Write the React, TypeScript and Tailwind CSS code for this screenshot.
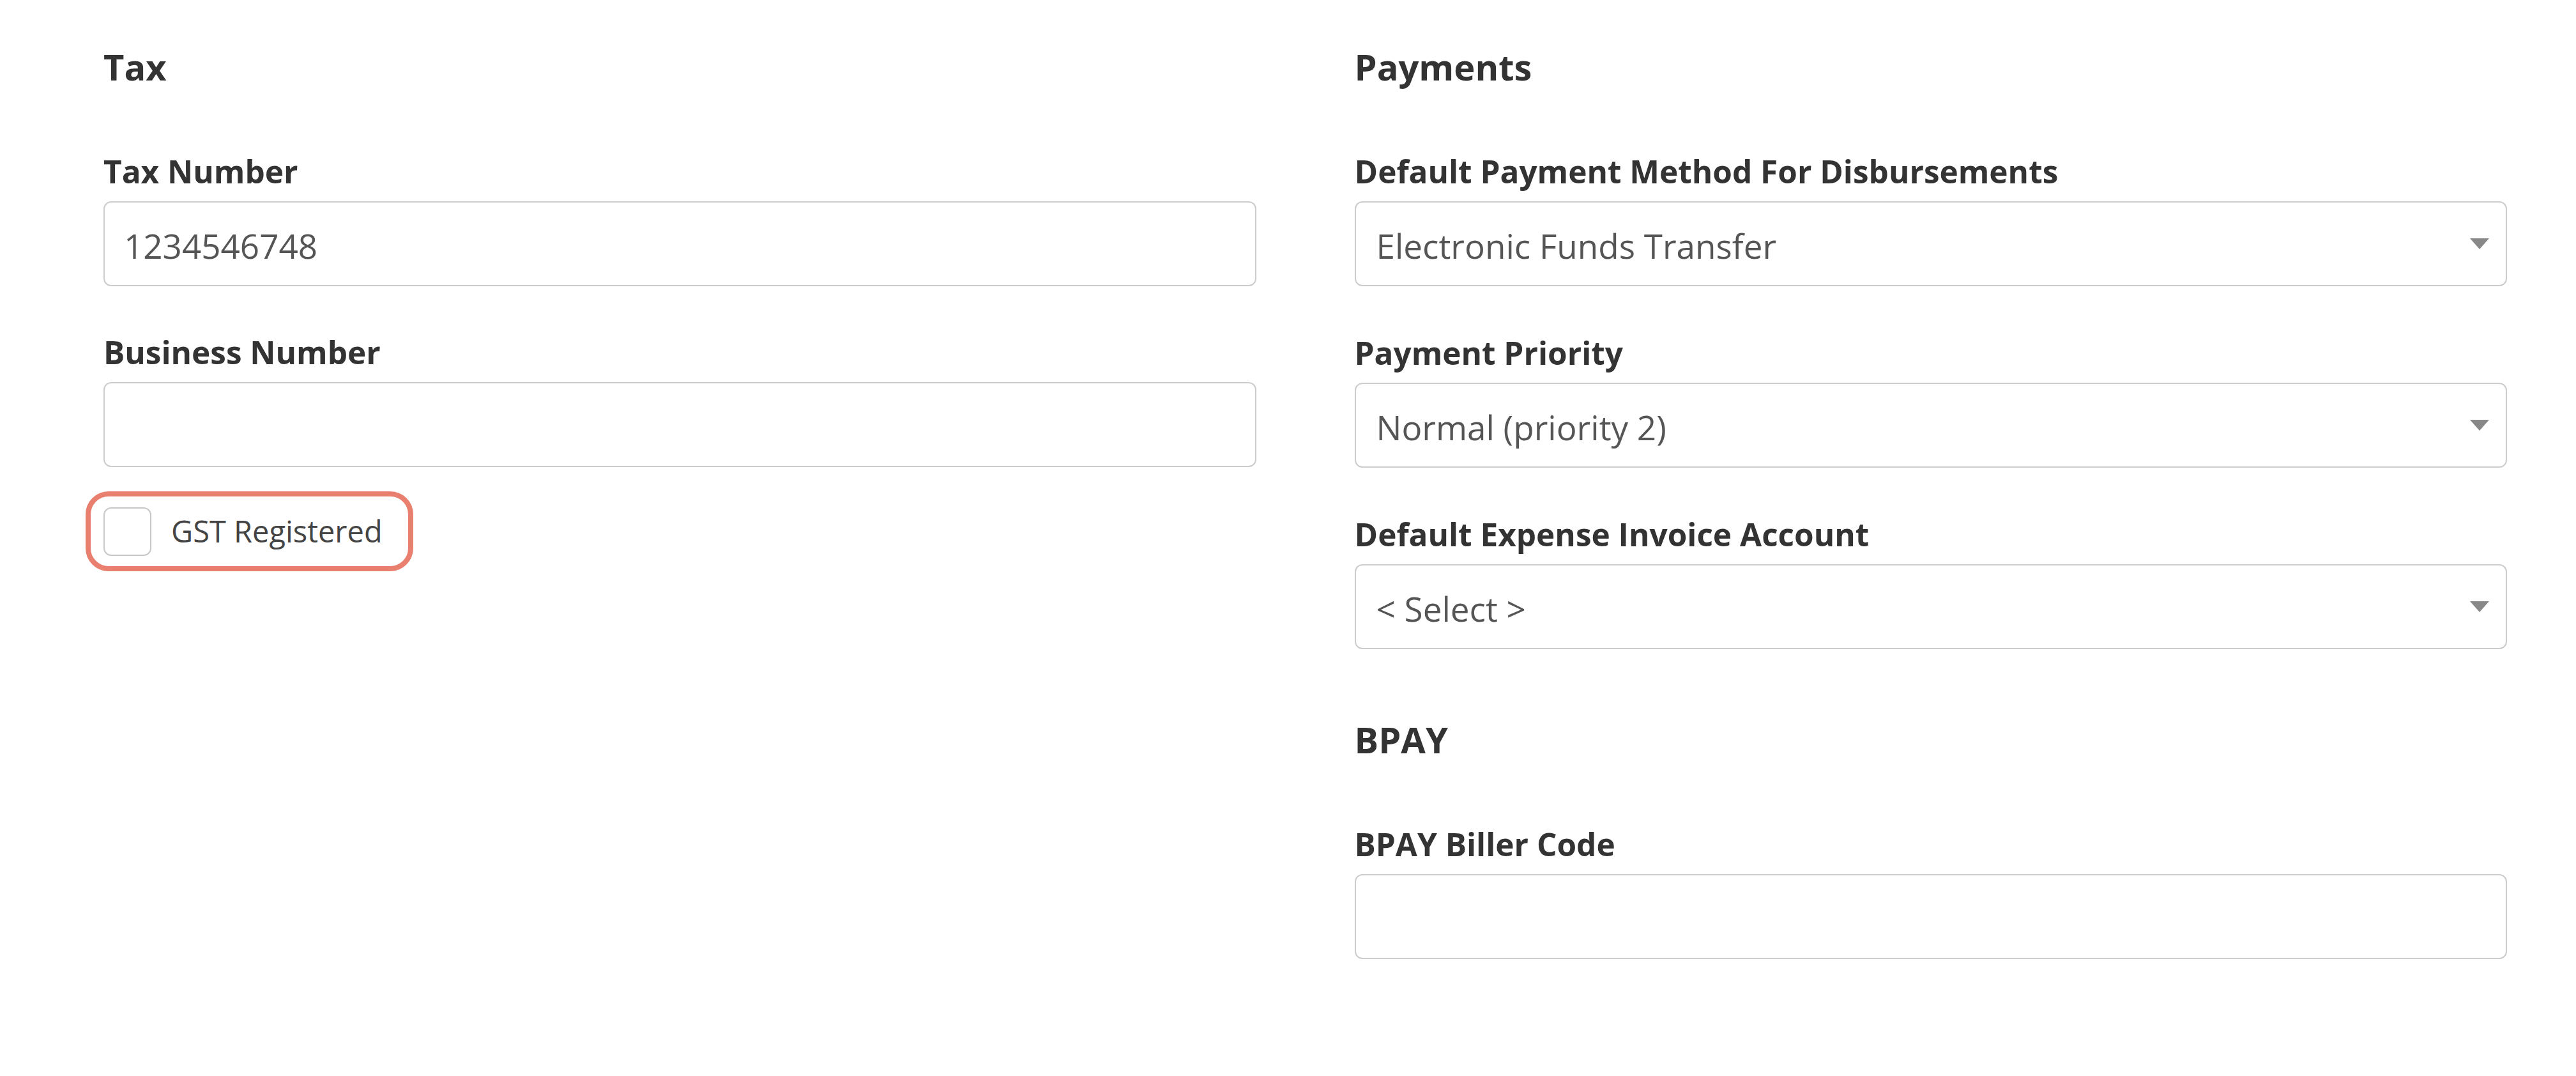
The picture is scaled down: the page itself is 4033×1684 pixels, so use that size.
import React from "react";

const font = { fontFamily: '"Open Sans", "Noto Sans", Arial, sans-serif' };

function Heading({ children }: { children: React.ReactNode }) {
  return (
    <h3 className="text-[56px] leading-[64px] font-bold text-[#333] mb-[104px]">
      {children}
    </h3>
  );
}

function Label({ children }: { children: React.ReactNode }) {
  return (
    <label className="block text-[49.5px] leading-[56px] font-bold text-[#333] mb-[19px]">
      {children}
    </label>
  );
}

function TextField({ label, value = "" }: { label: string; value?: string }) {
  return (
    <div>
      <Label>{label}</Label>
      <div className="h-[133px] w-full rounded-[12px] border-2 border-[#cccccc] bg-white pl-[30px] pt-[6px] flex items-center text-[53px] text-[#555]">
        {value}
      </div>
    </div>
  );
}

function SelectField({ label, value }: { label: string; value: string }) {
  return (
    <div>
      <Label>{label}</Label>
      <div className="h-[133px] w-full rounded-[12px] border-2 border-[#cccccc] bg-white pl-[32px] pr-[26px] flex items-center justify-between text-[53px] text-[#555]">
        <span className="pt-[6px]">{value}</span>
        <svg width="30" height="17" viewBox="0 0 30 17">
          <path d="M0 0 H30 L15 17 Z" fill="#888" />
        </svg>
      </div>
    </div>
  );
}

export default function App() {
  return (
    <div className="w-[4033px] h-[1684px] bg-white" style={font}>
      <div className="grid grid-cols-2 gap-x-[154px] pl-[162px] pr-[108px] pt-[72px]">
        {/* Tax */}
        <div>
          <Heading>Tax</Heading>
          <div className="flex flex-col gap-[75px]">
            <TextField label="Tax Number" value="1234546748" />
            <TextField label="Business Number" />
          </div>
          <div className="mt-[38px] -ml-[28px] inline-flex items-center gap-[31px] rounded-[36px] border-[8px] border-[#e9806f] pl-[20px] pr-[40px] h-[125px]">
            <span className="w-[75px] h-[76px] rounded-[12px] border-2 border-[#c8c8c8] bg-white" />
            <span className="text-[47px] text-[#444]">GST Registered</span>
          </div>
        </div>

        {/* Payments */}
        <div>
          <Heading>Payments</Heading>
          <div className="flex flex-col gap-[76px]">
            <SelectField label="Default Payment Method For Disbursements" value="Electronic Funds Transfer" />
            <SelectField label="Payment Priority" value="Normal (priority 2)" />
            <SelectField label="Default Expense Invoice Account" value="< Select >" />
          </div>
          <div className="mt-[109px]">
            <Heading>BPAY</Heading>
            <TextField label="BPAY Biller Code" />
          </div>
        </div>
      </div>
    </div>
  );
}
